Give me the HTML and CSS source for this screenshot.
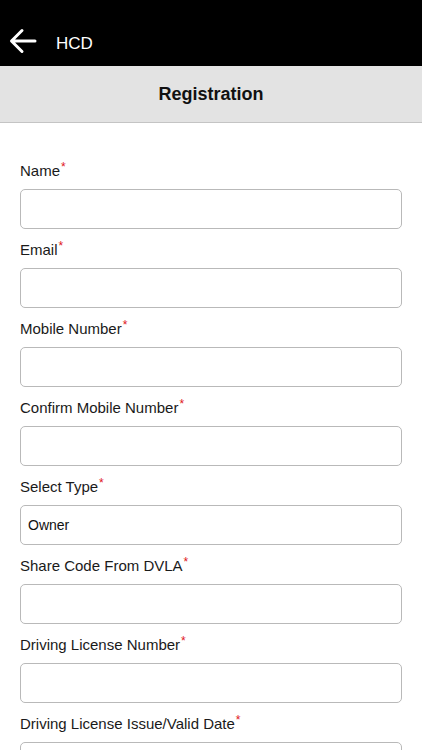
FILE: index.html
```html
<!DOCTYPE html>
<html>
<head>
<meta charset="utf-8">
<link rel="stylesheet" href="styles.css">
</head>
<body>
<header class="topbar">
  <svg class="back" width="28" height="26" viewBox="0 0 28 26">
    <path d="M26 13 H3 M13 2.5 L2.5 13 L13 23.5" fill="none" stroke="#fff" stroke-width="3" stroke-linecap="round" stroke-linejoin="round"/>
  </svg>
  <span class="app">HCD</span>
</header>
<div class="titlebar">Registration</div>
<form class="form">
  <div class="field"><label>Name<sup>*</sup></label><div class="input"></div></div>
  <div class="field"><label>Email<sup>*</sup></label><div class="input"></div></div>
  <div class="field"><label>Mobile Number<sup>*</sup></label><div class="input"></div></div>
  <div class="field"><label>Confirm Mobile Number<sup>*</sup></label><div class="input"></div></div>
  <div class="field"><label>Select Type<sup>*</sup></label><div class="input">Owner</div></div>
  <div class="field"><label>Share Code From DVLA<sup>*</sup></label><div class="input"></div></div>
  <div class="field"><label>Driving License Number<sup>*</sup></label><div class="input"></div></div>
  <div class="field"><label>Driving License Issue/Valid Date<sup>*</sup></label><div class="input"></div></div>
</form>
</body>
</html>
```

FILE: styles.css
```css
html, body {
  margin: 0;
  padding: 0;
  background: #fff;
  font-family: "Liberation Sans", Arial, sans-serif;
  overflow: hidden;
}
.topbar {
  height: 66px;
  background: #000;
  display: flex;
  align-items: flex-end;
  padding: 0 0 9px 9px;
  box-sizing: border-box;
  color: #fff;
}
.back {
  display: block;
  margin-bottom: 3px;
}
.app {
  font-size: 17px;
  margin-left: 19px;
  line-height: 24px;
  margin-bottom: 1px;
}
.titlebar {
  height: 56px;
  background: #e3e3e3;
  border-bottom: 1px solid #c4c4c4;
  display: flex;
  align-items: center;
  justify-content: center;
  font-size: 18px;
  font-weight: bold;
  color: #111;
}
.form {
  padding: 38px 20px 0 20px;
  margin: 0;
}
.field {
  margin-bottom: 11px;
}
.field label {
  display: block;
  font-size: 15px;
  line-height: 20px;
  color: #1a1a1a;
  margin-bottom: 8px;
}
.field sup {
  color: #e0161b;
  font-size: 12px;
  line-height: 0;
  vertical-align: 5px;
  margin-left: 1px;
}
.input {
  height: 40px;
  box-sizing: border-box;
  border: 1px solid #b9b9b9;
  border-radius: 5px;
  font-size: 14px;
  color: #111;
  padding-left: 7px;
  display: flex;
  align-items: center;
}
```
